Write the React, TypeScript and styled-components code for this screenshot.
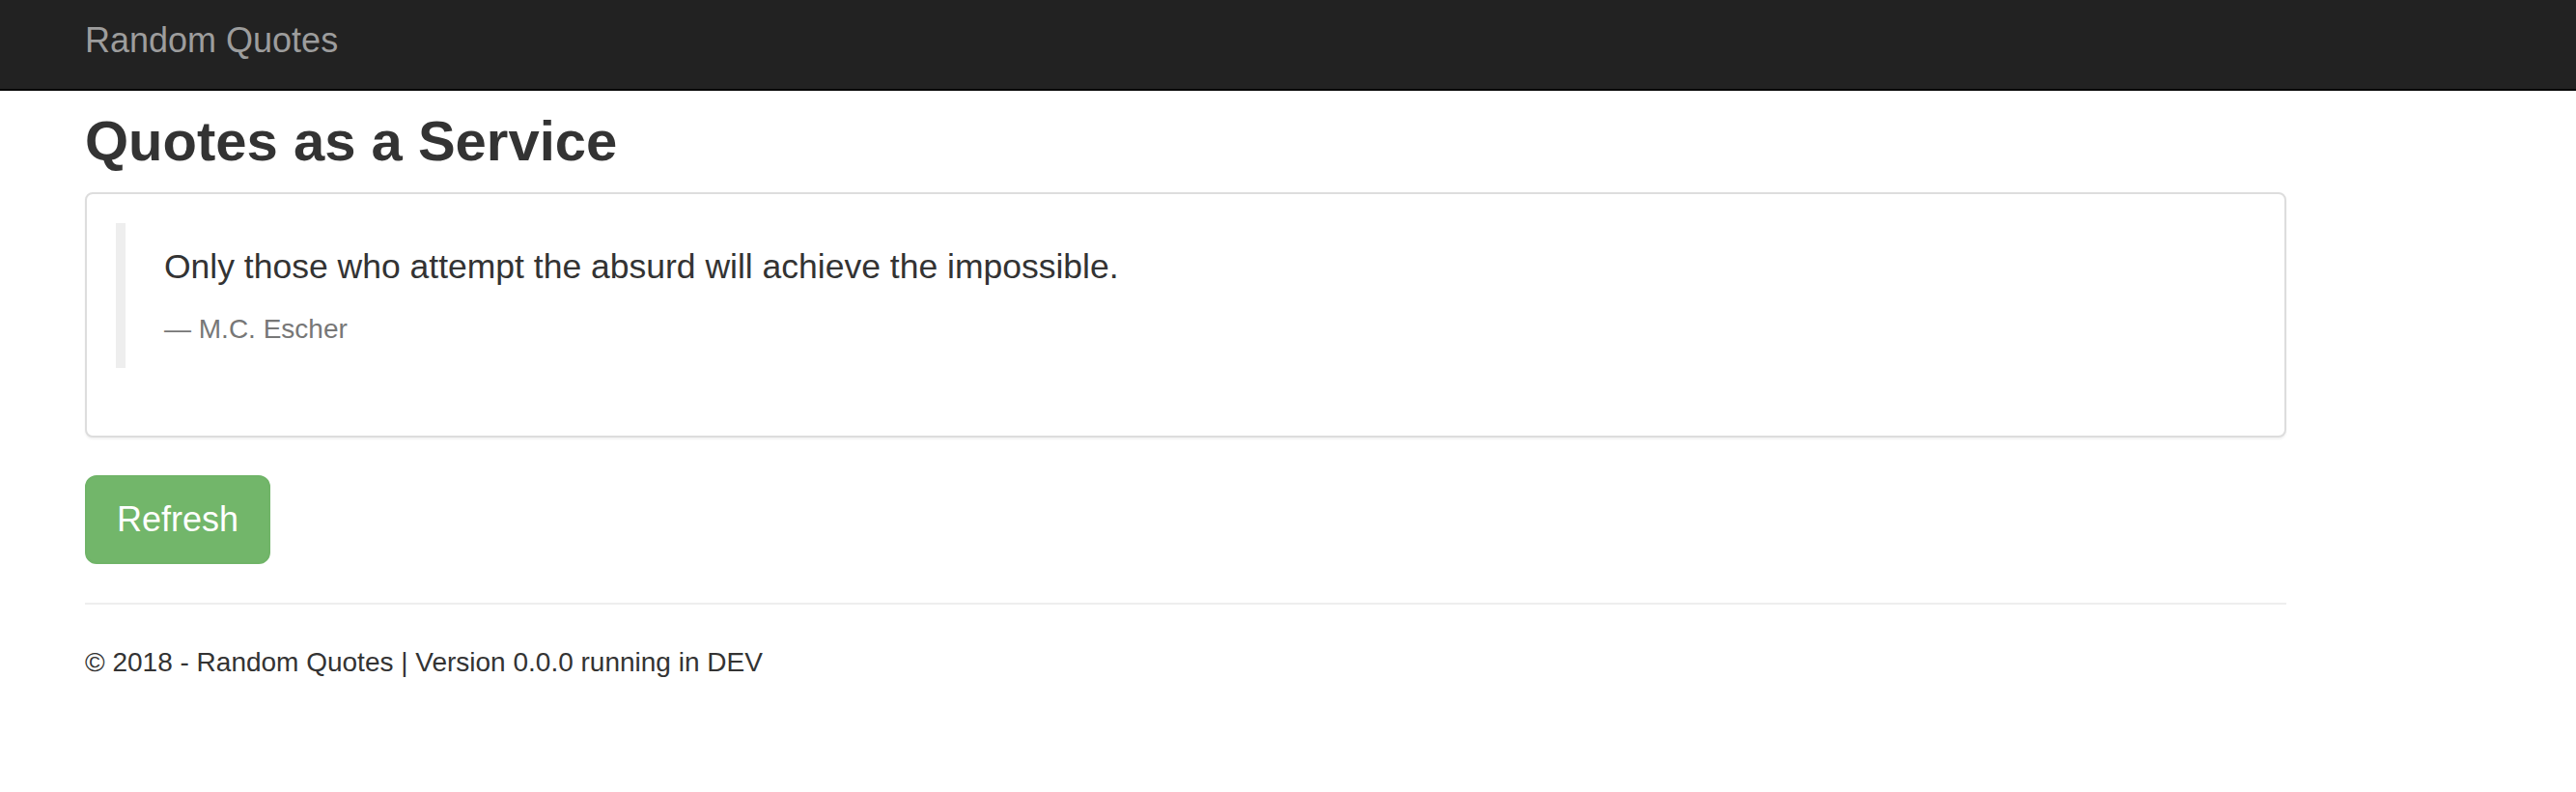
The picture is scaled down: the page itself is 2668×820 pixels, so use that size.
import React from "react";
import styled, { createGlobalStyle } from "styled-components";

const GlobalStyle = createGlobalStyle`
  html, body {
    margin: 0;
    padding: 0;
    background: #ffffff;
  }
  body {
    font-family: "Liberation Sans", Arial, Helvetica, sans-serif;
    font-size: 28px;
    line-height: 1.42857;
    color: #333333;
  }
  * { box-sizing: border-box; }
`;

const Navbar = styled.header`
  height: 94px;
  background: #222222;
  border-bottom: 2px solid #080808;
`;

const NavInner = styled.div`
  width: 2280px;
  margin-left: 88px;
  padding-top: 22px;
`;

const Brand = styled.a`
  display: inline-block;
  font-size: 36px;
  line-height: 40px;
  color: #9d9d9d;
  text-decoration: none;
`;

const Container = styled.main`
  width: 2280px;
  margin-left: 88px;
`;

const Title = styled.h2`
  margin: 20px 0 21px;
  font-size: 58px;
  line-height: 1.1;
  font-weight: 700;
  color: #333333;
`;

const Panel = styled.section`
  background: #ffffff;
  border: 2px solid #dddddd;
  border-radius: 8px;
  box-shadow: 0 2px 2px rgba(0, 0, 0, 0.05);
  padding: 30px;
  margin-bottom: 39px;
`;

const Quote = styled.blockquote`
  margin: 0 0 40px;
  padding: 20px 40px;
  border-left: 10px solid #eeeeee;
`;

const QuoteText = styled.p`
  margin: 0 0 20px;
  font-size: 35.5px;
  line-height: 50px;
`;

const Author = styled.footer`
  font-size: 28px;
  line-height: 40px;
  color: #777777;
  &::before {
    content: "\\2014 \\00A0";
  }
`;

const Button = styled.button`
  display: inline-block;
  padding: 20px 31px;
  font-family: inherit;
  font-size: 36px;
  line-height: 48px;
  color: #ffffff;
  background: #72b66a;
  border: 2px solid #70b468;
  border-radius: 12px;
  cursor: pointer;
`;

const Rule = styled.hr`
  margin: 40px 0;
  border: 0;
  border-top: 2px solid #eeeeee;
`;

const Footer = styled.footer`
  p {
    margin: 0 0 20px;
  }
`;

export default function App() {
  return (
    <>
      <GlobalStyle />
      <Navbar>
        <NavInner>
          <Brand href="#">Random Quotes</Brand>
        </NavInner>
      </Navbar>
      <Container>
        <Title>Quotes as a Service</Title>
        <Panel>
          <Quote>
            <QuoteText>Only those who attempt the absurd will achieve the impossible.</QuoteText>
            <Author>M.C. Escher</Author>
          </Quote>
        </Panel>
        <Button type="button">Refresh</Button>
        <Rule />
        <Footer>
          <p>© 2018 - Random Quotes | Version 0.0.0 running in DEV</p>
        </Footer>
      </Container>
    </>
  );
}
